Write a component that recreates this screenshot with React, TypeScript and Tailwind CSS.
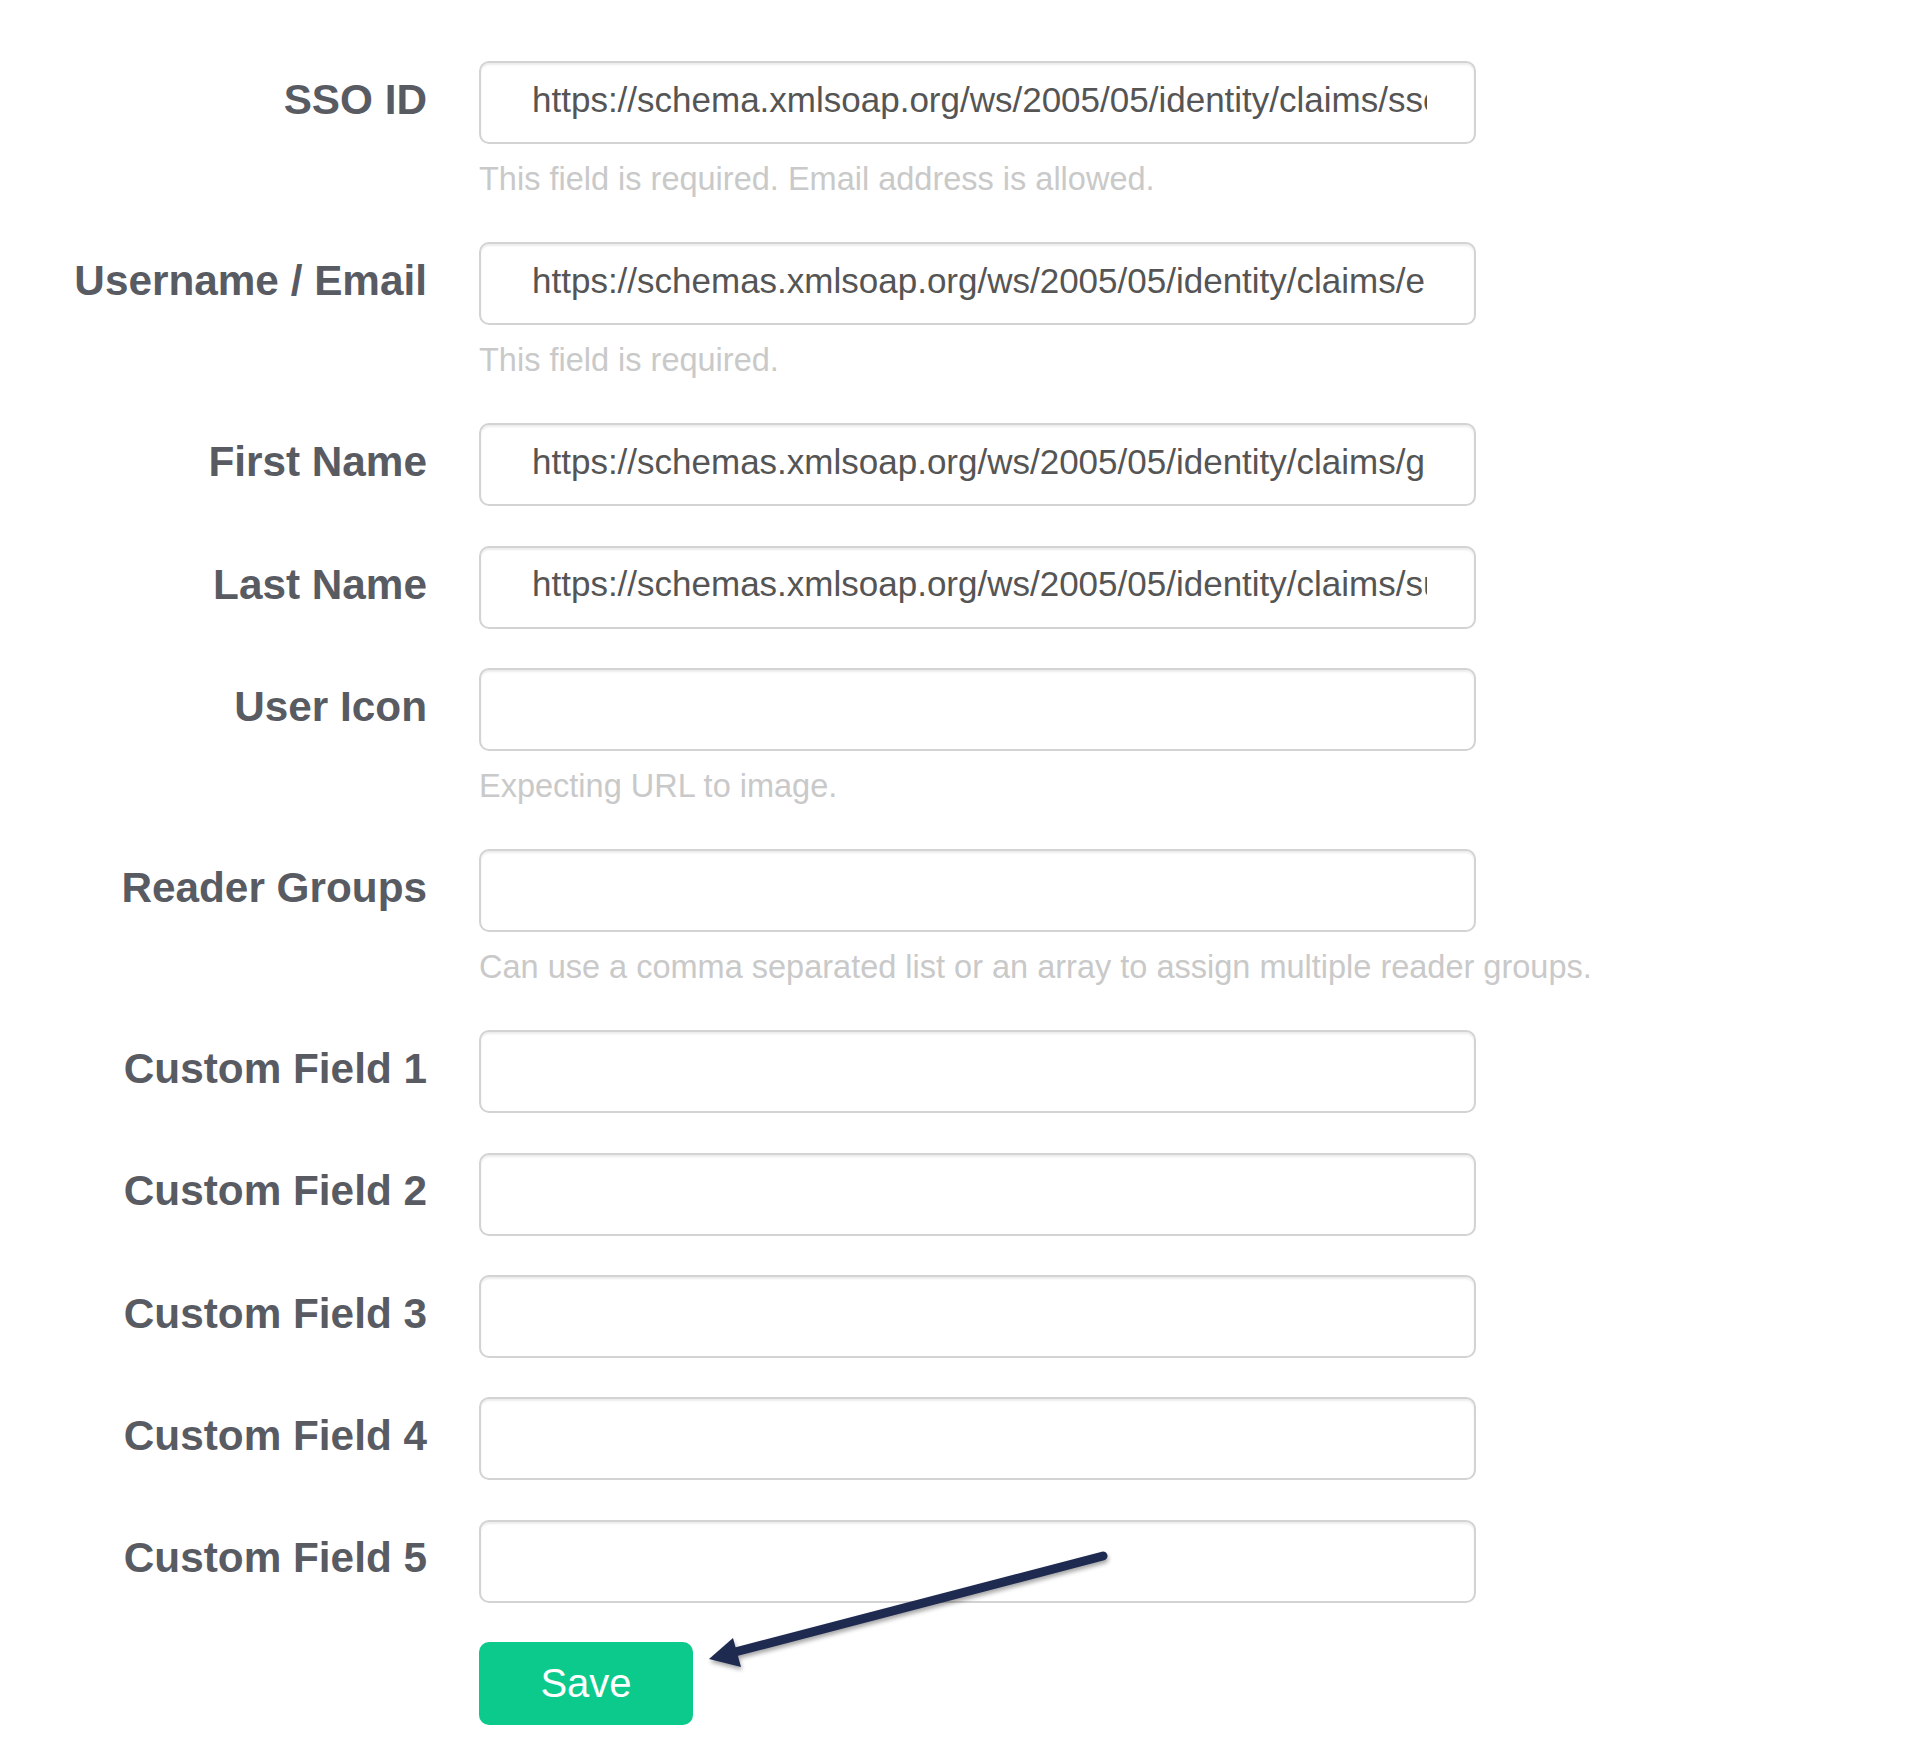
import React from 'react';

interface Field {
    label: string;
    value?: string;
    help?: string;
}

const fields: Field[] = [
    { label: 'SSO ID', value: 'https://schema.xmlsoap.org/ws/2005/05/identity/claims/sso', help: 'This field is required. Email address is allowed.' },
    { label: 'Username / Email', value: 'https://schemas.xmlsoap.org/ws/2005/05/identity/claims/emailaddress', help: 'This field is required.' },
    { label: 'First Name', value: 'https://schemas.xmlsoap.org/ws/2005/05/identity/claims/givenname' },
    { label: 'Last Name', value: 'https://schemas.xmlsoap.org/ws/2005/05/identity/claims/surname' },
    { label: 'User Icon', help: 'Expecting URL to image.' },
    { label: 'Reader Groups', help: 'Can use a comma separated list or an array to assign multiple reader groups.' },
    { label: 'Custom Field 1' },
    { label: 'Custom Field 2' },
    { label: 'Custom Field 3' },
    { label: 'Custom Field 4' },
    { label: 'Custom Field 5' },
];

const FormRow = ({ field }: { field: Field }) => (
    <div className="flex gap-[52px] mb-[39.3px]">
        <div className="w-[427px] h-[83px] flex items-center justify-end pb-[5px] shrink-0">
            <label className="text-[42.3px] font-bold text-[#595b63] leading-none whitespace-nowrap">
                {field.label}
            </label>
        </div>
        <div className="w-[997px] shrink-0">
            <input
                type="text"
                readOnly
                value={field.value ?? ''}
                className="block w-full h-[83px] rounded-[10px] border-2 border-[#d3d3d3] bg-white pl-[51px] pr-[47px] pb-[6px] text-[35px] text-[#555] shadow-[inset_0_2px_2px_rgba(0,0,0,0.075)] outline-none"
            />
            {field.help && (
                <p className="mt-[10.9px] text-[32.5px] leading-[48px] text-[#c9c9c9] whitespace-nowrap">
                    {field.help}
                </p>
            )}
        </div>
    </div>
);

export default function App() {
    return (
        <div className="relative min-h-screen bg-white pt-[61px] font-['Liberation_Sans',Arial,sans-serif]">
            {fields.map((f) => (
                <FormRow key={f.label} field={f} />
            ))}

            {/* Save button */}
            <div className="pl-[479px]">
                <button className="w-[214px] h-[83px] rounded-[10px] bg-[#0bca8c] text-white text-[40px] leading-none">
                    Save
                </button>
            </div>

            {/* Annotation arrow pointing at Save */}
            <svg
                className="absolute left-0 top-0 pointer-events-none drop-shadow-[1px_3px_2px_rgba(0,0,0,0.35)]"
                width="1910"
                height="1739"
                viewBox="0 0 1910 1739"
            >
                <line x1="1103" y1="1556" x2="735" y2="1652" stroke="#1e2a50" strokeWidth="9" strokeLinecap="round" />
                <polygon points="709,1659 733,1638 741,1667" fill="#1e2a50" />
            </svg>
        </div>
    );
}
